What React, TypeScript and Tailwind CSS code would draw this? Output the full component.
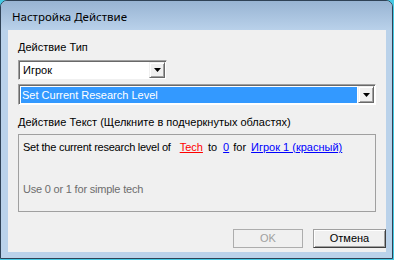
import React from "react";

function Arrow() {
  return (
    <svg width="7" height="4" viewBox="0 0 7 4" className="block">
      <polygon points="0,0 7,0 3.5,4" fill="#000" />
    </svg>
  );
}

function ArrowBtn() {
  return (
    <div className="w-[16px] h-full flex items-center justify-center bg-[#f0f0f0] border-t border-l border-t-[#f0f0f0] border-l-[#f0f0f0] border-b border-r border-b-[#696969] border-r-[#696969] shadow-[inset_1px_1px_0_#ffffff,inset_-1px_-1px_0_#a0a0a0]">
      <Arrow />
    </div>
  );
}

export default function App() {
  return (
    <div
      className="w-[394px] h-[260px] bg-[#45c9e4] overflow-hidden"
      style={{ fontFamily: '"Liberation Sans", Arial, sans-serif' }}
    >
      <div className="w-[393px] h-[259px] rounded-t-[7px] border border-[#2f4256] bg-[#bad2ea] flex flex-col overflow-hidden">
        <div className="h-[29px] shrink-0 bg-gradient-to-b from-[#98b4d3] to-[#b9d1ea] flex items-center pl-[11px] pt-[3px]">
          <span
            className="text-[11.5px] text-black"
            style={{ fontFamily: '"Noto Sans", "Liberation Sans", sans-serif' }}
          >
            Настройка Действие
          </span>
        </div>
        <div className="flex-1 flex pl-[7px] pr-[6px] pb-[6px]">
          <div className="flex-1 bg-[#f0f0f0] flex flex-col text-[11px] text-black">
            <div className="mt-[10px] ml-[10px] h-[14px] leading-[14px]">Действие Тип</div>
            <div className="mt-[6px] ml-[10px] w-[149px] h-[20px] flex border border-t-[#a0a0a0] border-l-[#a0a0a0] border-b-[#f0f0f0] border-r-[#f0f0f0] bg-white shadow-[inset_1px_1px_0_#696969]">
              <div className="flex-1 pl-[3px] pt-[1px] leading-[17px] ml-[1px]">Игрок</div>
              <div className="py-[1px] pr-[1px]">
                <ArrowBtn />
              </div>
            </div>
            <div className="mt-[4px] ml-[10px] w-[358px] h-[21px] flex border border-t-[#a0a0a0] border-l-[#a0a0a0] border-b-[#ffffff] border-r-[#ffffff] bg-white shadow-[inset_1px_1px_0_#696969]">
              <div className="flex-1 flex pl-[2px] pt-[2px] pb-[1px]">
                <div className="flex-1 bg-[#3399ff] text-white pl-[1px] leading-[16px]">
                  Set Current Research Level
                </div>
              </div>
              <div className="py-[1px] pr-[1px] pl-[1px]">
                <ArrowBtn />
              </div>
            </div>
            <div className="mt-[10px] ml-[10px] h-[14px] leading-[14px]">
              Действие Текст (Щелкните в подчеркнутых областях)
            </div>
            <div className="mt-[5px] ml-[10px] w-[358px] h-[78px] border border-[#a0a0a0] flex flex-col pl-[4px]">
              <div className="mt-[5px] h-[14px] leading-[14px] whitespace-pre flex">
                <span className="tracking-[-0.25px]">Set the current research level of</span>
                <span className="ml-[9px] text-[#ff0000] underline">Tech</span>
                <span className="ml-[5px]">to</span>
                <span className="ml-[6px] text-[#0000ff] underline">0</span>
                <span className="ml-[4px]">for</span>
                <span className="ml-[5px] text-[#0000ff] underline">Игрок 1 (красный)</span>
              </div>
              <div className="mt-[28px] h-[14px] leading-[14px] text-[#6d6d6d] tracking-[-0.2px]">
                Use 0 or 1 for simple tech
              </div>
            </div>
            <div className="mt-[17px] flex justify-end gap-[10px]">
              <div className="w-[70px] h-[19px] border border-[#adadad] bg-[#f0f0f0] flex items-center justify-center text-[#a0a0a0]">
                OK
              </div>
              <div className="w-[73px] h-[19px] border border-t-[#a0a0a0] border-l-[#a0a0a0] border-b-[#404040] border-r-[#404040] bg-[#f0f0f0] shadow-[inset_1px_1px_0_#ffffff,inset_-1px_-1px_0_#a0a0a0] flex items-center justify-center">
                Отмена
              </div>
            </div>
          </div>
        </div>
      </div>
    </div>
  );
}
